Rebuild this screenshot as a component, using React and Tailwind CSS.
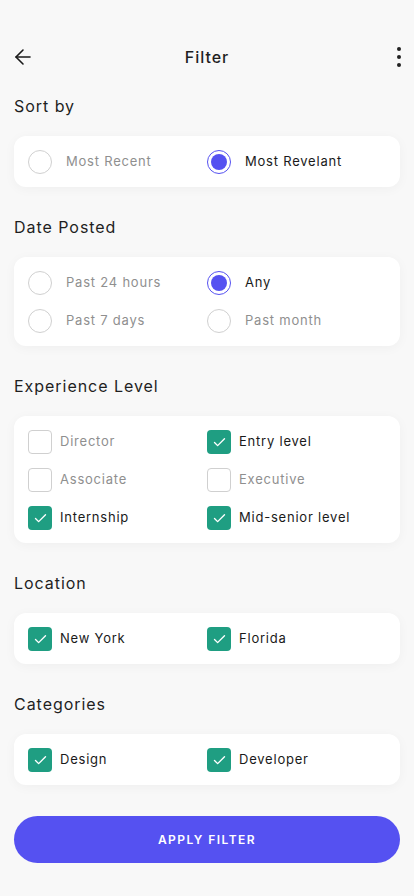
import { ArrowLeft, Check } from "lucide-react"

function Radio({ label, checked }) {
  return (
    <div className="flex items-center h-[24px]">
      {checked ? (
        <div className="w-[24px] h-[24px] rounded-full border border-[#5551f1] flex items-center justify-center">
          <div className="w-[16px] h-[16px] rounded-full bg-[#5551f1]" />
        </div>
      ) : (
        <div className="w-[24px] h-[24px] rounded-full border border-[#d0d0d0]" />
      )}
      <span
        className={
          "ml-[14px] text-[13px] tracking-[0.06em] " +
          (checked ? "text-[#1a1a1a]" : "text-[#8f8f8f]")
        }
      >
        {label}
      </span>
    </div>
  )
}

function Checkbox({ label, checked }) {
  return (
    <div className="flex items-center h-[24px]">
      {checked ? (
        <div className="w-[24px] h-[24px] rounded-[4px] bg-[#1f9e82] flex items-center justify-center">
          <Check className="w-[15px] h-[15px] text-white" strokeWidth={2.2} />
        </div>
      ) : (
        <div className="w-[24px] h-[24px] rounded-[4px] border border-[#d0d0d0]" />
      )}
      <span
        className={
          "ml-[8px] text-[13px] tracking-[0.06em] " +
          (checked ? "text-[#1a1a1a]" : "text-[#8f8f8f]")
        }
      >
        {label}
      </span>
    </div>
  )
}

function Section({ title, children, first }) {
  return (
    <div className={first ? "mt-[13px]" : "mt-[28px]"}>
      <h2 className="h-[24px] leading-[24px] text-[16px] text-[#1f1f1f] tracking-[0.06em]">
        {title}
      </h2>
      <div className="mt-[18px] bg-white rounded-[12px] shadow-[0_2px_12px_rgba(0,0,0,0.04)] px-[14px] pt-[14px] pb-[13px] grid grid-cols-2 gap-y-[14px]">
        {children}
      </div>
    </div>
  )
}

export default function App() {
  return (
    <div
      className="min-h-[896px] bg-[#f8f8f8] px-[14px] pt-[33px] pb-[33px]"
      style={{ fontFamily: "Inter, 'Noto Sans', sans-serif" }}
    >
      {/* Header */}
      <div className="h-[48px] flex items-center justify-between">
        <div className="w-[24px]">
          <ArrowLeft className="w-[24px] h-[24px] -ml-[3px] text-[#1a1a1a]" strokeWidth={1.6} />
        </div>
        <h1 className="text-[16px] font-medium text-[#1f1f1f] tracking-[0.06em]">Filter</h1>
        <div className="w-[24px] flex flex-col items-end gap-[4px]">
          <span className="w-[4px] h-[4px] rounded-full bg-[#222222] -mr-[1px]" />
          <span className="w-[4px] h-[4px] rounded-full bg-[#222222] -mr-[1px]" />
          <span className="w-[4px] h-[4px] rounded-full bg-[#222222] -mr-[1px]" />
        </div>
      </div>

      <Section title="Sort by" first>
        <Radio label="Most Recent" />
        <Radio label="Most Revelant" checked />
      </Section>

      <Section title="Date Posted">
        <Radio label="Past 24 hours" />
        <Radio label="Any" checked />
        <Radio label="Past 7 days" />
        <Radio label="Past month" />
      </Section>

      <Section title="Experience Level">
        <Checkbox label="Director" />
        <Checkbox label="Entry level" checked />
        <Checkbox label="Associate" />
        <Checkbox label="Executive" />
        <Checkbox label="Internship" checked />
        <Checkbox label="Mid-senior level" checked />
      </Section>

      <Section title="Location">
        <Checkbox label="New York" checked />
        <Checkbox label="Florida" checked />
      </Section>

      <Section title="Categories">
        <Checkbox label="Design" checked />
        <Checkbox label="Developer" checked />
      </Section>

      <button className="mt-[31px] w-full h-[47px] rounded-full bg-[#5551f1] text-white text-[12px] font-semibold tracking-[0.12em]">
        APPLY FILTER
      </button>
    </div>
  )
}
